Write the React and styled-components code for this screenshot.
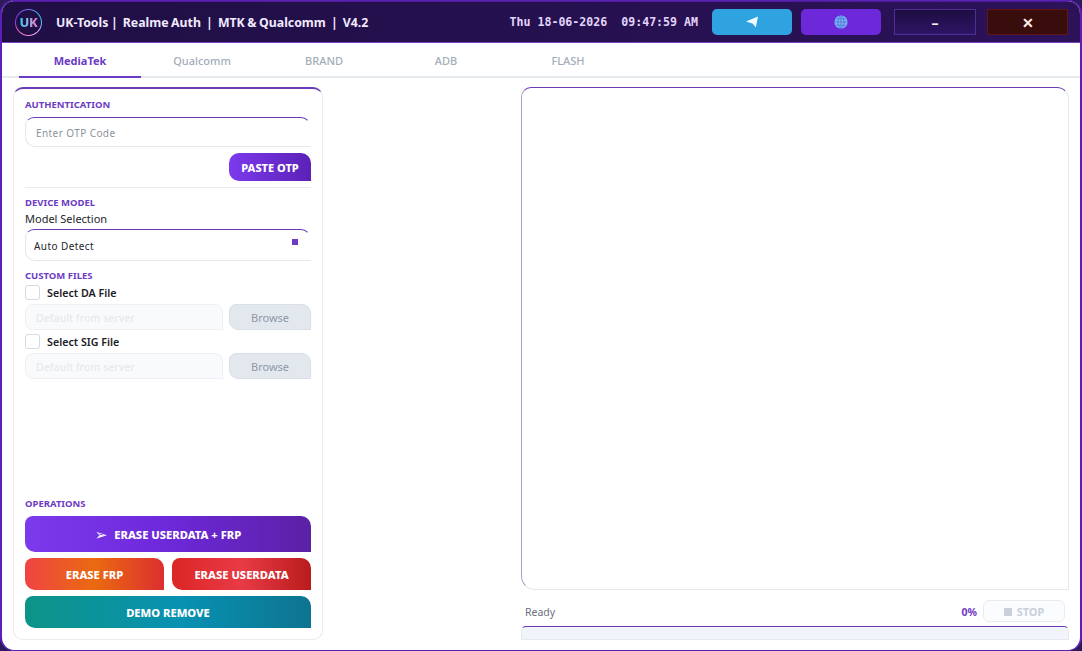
import React from "react";
import styled, { createGlobalStyle } from "styled-components";

const Global = createGlobalStyle`
  html, body { margin: 0; padding: 0; width: 1082px; height: 651px; overflow: hidden; background: #2b1a5c; }
  * { box-sizing: border-box; }
  body { font-family: "Noto Sans", "Open Sans", sans-serif; }
`;

const Win = styled.div`
  width: 1082px; height: 651px; display: flex; flex-direction: column;
  background: #fff; border: 2px solid #5b21b6; border-top-width: 1px; border-bottom-width: 1px;
  border-radius: 14px; overflow: hidden;
`;
const TitleBar = styled.header`
  height: 42px; flex: none; display: flex; align-items: center; padding: 0 12px 0 13px;
  background: linear-gradient(90deg, #1f0f45 0%, #2c1259 100%);
  border-top: 1px solid #4c1d95; border-bottom: 1px solid #7e3fc0;
`;
const Logo = styled.div`
  width: 27px; height: 27px; border-radius: 50%; flex: none; padding: 1px;
  background: conic-gradient(#7c6ff0, #22d3ee, #f0abfc, #f472b6, #7c3aed, #7c6ff0);
  margin-right: 14px;
`;
const LogoInner = styled.div`
  width: 100%; height: 100%; border-radius: 50%; background: #1f0f45;
  display: flex; align-items: center; justify-content: center;
`;
const LogoText = styled.span`
  font: 800 13px "Noto Sans", sans-serif; letter-spacing: -0.2px;
  background: linear-gradient(90deg, #22d3ee 0%, #8fb5e8 50%, #f472b6 100%);
  -webkit-background-clip: text; background-clip: text; color: transparent;
`;
const Title = styled.div`
  font-size: 12.3px; font-weight: 700; word-spacing: -0.65px; color: #f0e9ff; white-space: pre; flex: none;
`;
const Clock = styled.div`
  margin-left: auto; font: 700 11.6px "DejaVu Sans Mono", monospace; color: #e2d4fb; white-space: pre; margin-right: 14px;
`;
const TopBtn = styled.div`
  width: 80px; height: 26px; flex: none; border-radius: 5px; background: ${p => p.$bg};
  display: flex; align-items: center; justify-content: center; margin-right: ${p => p.$mr}px;
`;
const WinBtn = styled.div`
  width: ${p => p.$w}px; height: 26px; flex: none; margin-right: ${p => p.$mr}px;
  background: ${p => p.$bg}; border: 1px solid ${p => p.$bd};
  display: flex; align-items: center; justify-content: center;
  color: #fff1e6; font-size: 14px; font-weight: 700;
`;
const Tabs = styled.nav`
  height: 35px; flex: none; display: flex; padding-left: 17px; border-bottom: 2px solid #e6ebef;
`;
const Tab = styled.div`
  width: 122px; height: 35px; flex: none; display: flex; align-items: center; justify-content: center; padding-top: 2px;
  font-size: 11px; font-weight: ${p => (p.$active ? 700 : 500)};
  color: ${p => (p.$active ? "#6d3bc4" : "#a3adba")};
  border-bottom: 2px solid ${p => (p.$active ? "#6d3bc4" : "transparent")};
`;
const Body = styled.main`
  flex: 1; min-height: 0; display: flex; justify-content: space-between; padding: 9px 11px 10px 11px;
`;
const LeftPanel = styled.section`
  width: 310px; display: flex; flex-direction: column; padding: 10px 11px 11px 11px;
  border: 1px solid #e8ebf0; border-top: 2px solid #6d3bb8; border-radius: 10px;
`;
const Section = styled.h3`
  margin: 0; font-size: 9.5px; font-weight: 700; line-height: 12px; color: #6d3bc4;
`;
const Input = styled.div`
  height: 30px; margin-top: 6px; display: flex; align-items: center; padding: 1px 0 0 10px;
  font-size: 10px; letter-spacing: 0.42px; color: #8d939c;
  border: 1px solid #e3e7ee; border-top-color: #6d3bb8; border-radius: 9px 10px 0 10px; border-right-color: transparent;
`;
const SelectBox = styled(Input)`
  height: 32px; margin-top: 4px; padding-left: 8px; padding-right: 12px; justify-content: space-between; color: #23262b;
`;
const Mark = styled.span`
  width: 6px; height: 6px; background: #6d3bc4; margin-top: -7px;
`;
const ActionRow = styled.div`
  display: flex; justify-content: flex-end; margin-top: 6px;
`;
const Paste = styled.div`
  width: 82px; height: 28px; display: flex; align-items: center; justify-content: center; padding-top: 1px;
  background: linear-gradient(90deg, #7c3aed, #5b21b6); color: #fff; font-size: 11px; font-weight: 800;
  border-radius: 10px 10px 0 10px;
`;
const Rule = styled.hr`
  border: 0; height: 1px; background: #e8ebf0; margin: 6px 0 9px;
`;
const Plain = styled.div`
  font-size: 11px; line-height: 14px; margin-top: 2px; padding-top: 1px; height: 14px; color: #23262b;
`;
const SpacedSection = styled(Section)`
  margin-top: 9px;
`;
const CheckRow = styled.label`
  display: flex; align-items: center; gap: 7px; height: 15px; margin-top: ${p => p.$mt}px;
  font-size: 10.7px; font-weight: 600; color: #1d2026;
`;
const Box = styled.span`
  width: 15px; height: 15px; border: 1px solid #d5d9e0; border-radius: 3px; background: #fff;
`;
const FileRow = styled.div`
  display: flex; gap: 6px; margin-top: 4px;
`;
const FileField = styled.div`
  flex: 1; height: 26px; display: flex; align-items: center; padding: 1px 0 0 10px;
  font-size: 10.5px; letter-spacing: 0.14px; color: #e4e7ec; background: #f9fafc; border: 1px solid #edf0f4; border-radius: 8px 8px 0 8px;
`;
const Browse = styled.div`
  width: 82px; height: 26px; display: flex; align-items: center; justify-content: center; padding-top: 1px;
  font-size: 11px; color: #8e98a6; background: #e3e8ef; border: 1px solid #d9dfe7; border-radius: 7px 9px 0 9px;
`;
const Spacer = styled.div`flex: 1;`;
const Action = styled.div`
  height: ${p => p.$h}px; flex: ${p => (p.$grow ? "1" : "none")}; display: flex; align-items: center; justify-content: center; gap: 7px; padding-top: 1px;
  margin-top: ${p => p.$mt || 0}px; background: ${p => p.$bg}; color: #fff; font-size: 11.2px; font-weight: 800;
  border-radius: 8px 10px 0 10px;
`;
const Pair = styled.div`
  display: flex; gap: 8px; margin-top: 6px;
`;
const Glyph = styled.span`
  font-family: "DejaVu Sans", sans-serif; font-size: 15px; line-height: 14px; font-weight: 700;
`;
const RightCol = styled.section`
  width: 548px; display: flex; flex-direction: column;
`;
const Log = styled.div`
  height: 503px; flex: none; border: 1px solid #e3e7ee; border-top-color: #6d3bb8; border-left-color: #a99cc8; border-radius: 10px 12px 0 14px;
`;
const Status = styled.div`
  display: flex; align-items: center; height: 22px; margin-top: 10px; padding: 0 4px;
  font-size: 10.5px; color: #6b7280;
`;
const Ready = styled.span`
  padding-top: 2px;
`;
const Pct = styled.span`
  margin-left: auto; padding-top: 2px; font-size: 10.5px; font-weight: 700; color: #6d3bc4; margin-right: 6px;
`;
const Stop = styled.div`
  width: 82px; height: 22px; display: flex; align-items: center; justify-content: center; gap: 5px; padding-top: 1px;
  border: 1px solid #e8ecf1; border-radius: 6px; background: #fbfcfd; color: #c9d0da; font-size: 11px; font-weight: 700;
`;
const StopMark = styled.span`
  width: 8px; height: 8px; background: #c9d0da;
`;
const Progress = styled.div`
  height: 14px; margin-top: 4px; background: #f1f4fa; border: 1px solid #e6e9ef; border-top: 1px solid #6d3bb8; border-radius: 5px 5px 0 0;
`;

const Plane = () => (
  <svg width="14" height="14" viewBox="0 0 14 14"><path d="M1 6.5 13 1.5 10.8 12.5 7.6 8.6 Z" fill="#f4fbff" /></svg>
);
const Globe = () => (
  <svg width="14" height="14" viewBox="0 0 14 14" fill="none">
    <circle cx="7" cy="7" r="6.6" fill="#7fb2f5" />
    <g stroke="#4d76d6" strokeWidth=".8">
      <ellipse cx="7" cy="7" rx="3" ry="6.4" /><path d="M7 .6v12.8M.6 7h12.8M1.6 3.8h10.8M1.6 10.2h10.8" />
    </g>
  </svg>
);

export default function App() {
  return (
    <Win>
      <Global />
      <TitleBar>
        <Logo><LogoInner><LogoText>UK</LogoText></LogoInner></Logo>
        <Title>{"UK-Tools |  Realme Auth  |  MTK & Qualcomm  |  V4.2"}</Title>
        <Clock>{"Thu 18-06-2026  09:47:59 AM"}</Clock>
        <TopBtn $bg="#2ea3e0" $mr={9}><Plane /></TopBtn>
        <TopBtn $bg="#6d28d9" $mr={13}><Globe /></TopBtn>
        <WinBtn $w={82} $bg="linear-gradient(#1c0d40,#2f1566)" $bd="#4f2f94" $mr={11}>–</WinBtn>
        <WinBtn $w={81} $bg="#3a0d0d" $bd="#5e1616" $mr={0}>✕</WinBtn>
      </TitleBar>
      <Tabs>
        <Tab $active>MediaTek</Tab>
        <Tab>Qualcomm</Tab>
        <Tab>BRAND</Tab>
        <Tab>ADB</Tab>
        <Tab>FLASH</Tab>
      </Tabs>
      <Body>
        <LeftPanel>
          <Section>AUTHENTICATION</Section>
          <Input>Enter OTP Code</Input>
          <ActionRow><Paste>PASTE OTP</Paste></ActionRow>
          <Rule />
          <Section>DEVICE MODEL</Section>
          <Plain>Model Selection</Plain>
          <SelectBox>Auto Detect<Mark /></SelectBox>
          <SpacedSection>CUSTOM FILES</SpacedSection>
          <CheckRow $mt={3}><Box />Select DA File</CheckRow>
          <FileRow><FileField>Default from server</FileField><Browse>Browse</Browse></FileRow>
          <CheckRow $mt={4}><Box />Select SIG File</CheckRow>
          <FileRow><FileField>Default from server</FileField><Browse>Browse</Browse></FileRow>
          <Spacer />
          <Section>OPERATIONS</Section>
          <Action $h={36} $mt={6} $bg="linear-gradient(90deg,#7c3aed,#6d28d9 50%,#5b21a6)"><Glyph>➢</Glyph>ERASE USERDATA + FRP</Action>
          <Pair>
            <Action $h={32} $grow $bg="linear-gradient(90deg,#ef4444,#ea6a10 50%,#dc2f2f)">ERASE FRP</Action>
            <Action $h={32} $grow $bg="linear-gradient(90deg,#dc2626,#e83a46 50%,#b91c1c)">ERASE USERDATA</Action>
          </Pair>
          <Action $h={32} $mt={6} $bg="linear-gradient(90deg,#0d9488,#0891b2 55%,#0e7490)">DEMO REMOVE</Action>
        </LeftPanel>
        <RightCol>
          <Log />
          <Status><Ready>Ready</Ready><Pct>0%</Pct><Stop><StopMark />STOP</Stop></Status>
          <Progress />
        </RightCol>
      </Body>
    </Win>
  );
}
